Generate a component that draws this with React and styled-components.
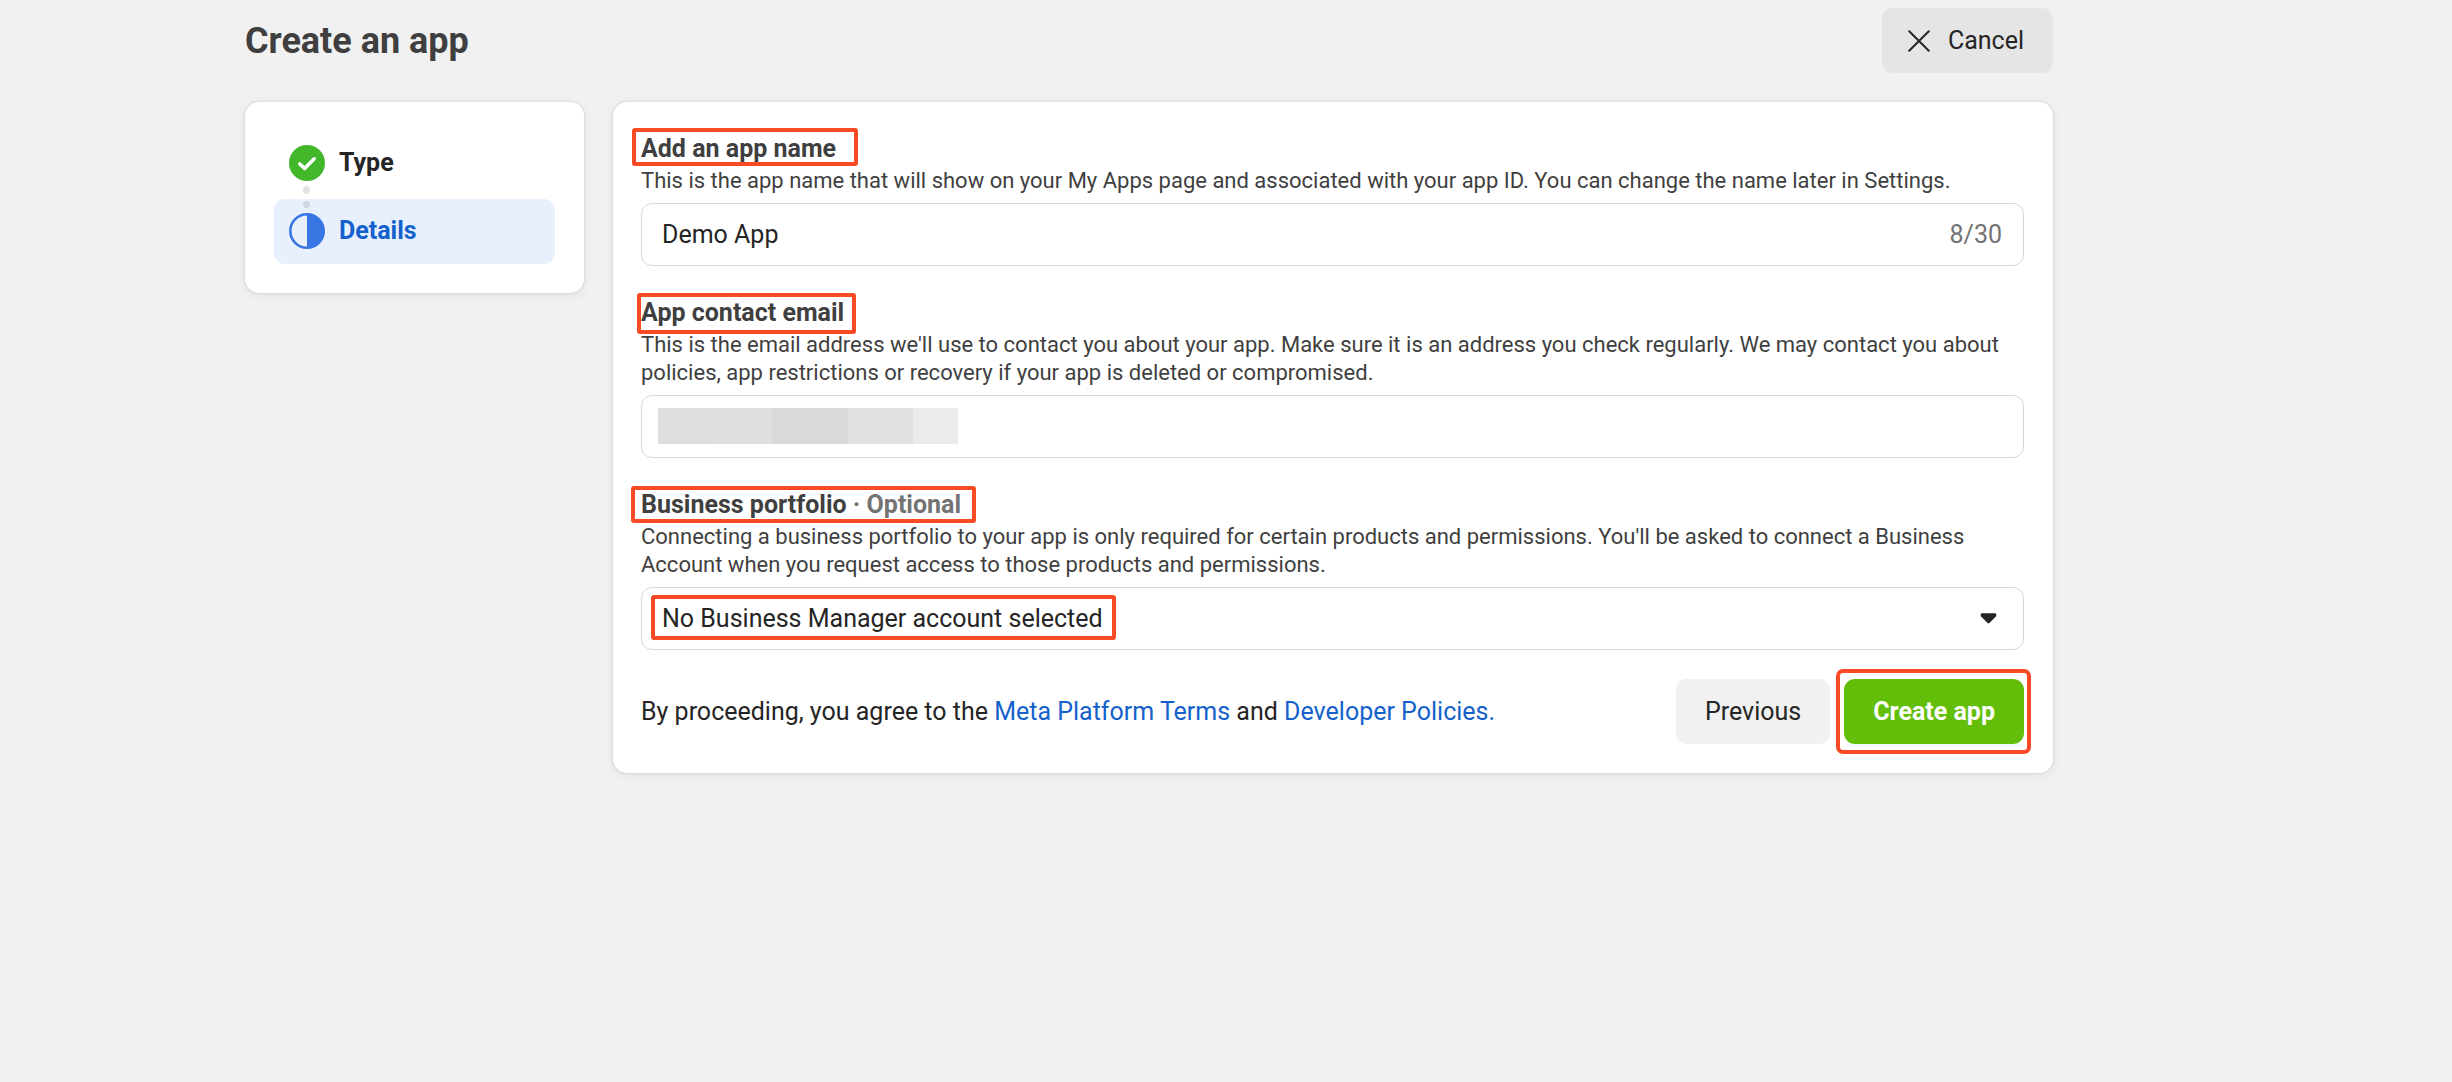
import React, { useState } from "react";
import styled, { createGlobalStyle, css } from "styled-components";

const GlobalStyle = createGlobalStyle`
  *, *::before, *::after { box-sizing: border-box; }
  body {
    margin: 0;
    background: #f1f1f1;
    color: #252525;
    font-family: Roboto, "Liberation Sans", sans-serif;
    font-size: 25px;
    line-height: 32px;
  }
  button, input, select { font: inherit; color: inherit; }
`;

const Page = styled.div`
  display: flex;
  flex-direction: column;
  gap: 29px;
  padding: 8px 399px 29px 245px;
`;

const Header = styled.header`
  display: flex;
  align-items: center;
  justify-content: space-between;
`;

const Title = styled.h1`
  margin: 0;
  font-size: 36px;
  line-height: 44px;
  font-weight: 700;
  color: #3f3f3f;
`;

const Button = styled.button`
  display: inline-flex;
  align-items: center;
  gap: 18px;
  height: 65px;
  padding: 0 29px;
  border: 0;
  border-radius: 11px;
  cursor: pointer;
  white-space: nowrap;
  background: #f1f1f1;
  ${(p) =>
    p.$variant === "primary" &&
    css`
      background: #63be09;
      color: #fff;
      font-weight: 700;
    `}
  ${(p) =>
    p.$variant === "cancel" &&
    css`
      background: #e5e5e5;
      padding: 0 29px 0 26px;
    `}
`;

const Columns = styled.div`
  display: grid;
  grid-template-columns: 339px 1fr;
  gap: 29px;
  align-items: start;
`;

const card = css`
  background: #fff;
  border-radius: 14px;
  padding: 29px;
  box-shadow: 0 0 3px rgba(0, 0, 0, 0.16), 0 3px 12px rgba(0, 0, 0, 0.06);
`;

const Sidebar = styled.nav`
  ${card}
`;

const Steps = styled.ol`
  display: flex;
  flex-direction: column;
  gap: 3px;
  margin: 0;
  padding: 0;
  list-style: none;
`;

const Step = styled.li`
  position: relative;
  display: flex;
  align-items: flex-start;
  gap: 14px;
  height: 65px;
  padding: 14px 15px;
  border-radius: 11px;
  line-height: 36px;
  font-weight: 700;
  color: ${(p) => (p.$active ? "#1461cc" : "#252525")};
  background: ${(p) => (p.$active ? "#e8f0fe" : "transparent")};
`;

const Connector = styled.svg`
  position: absolute;
  left: 29px;
  top: -13px;
`;

const Form = styled.form`
  ${card}
  padding-left: 28px;
  display: flex;
  flex-direction: column;
  gap: 29px;
`;

const Field = styled.div`
  display: flex;
  flex-direction: column;
  align-items: flex-start;
`;

const Highlight = styled.span`
  position: relative;
  &::after {
    content: "";
    position: absolute;
    inset: ${(p) => p.$inset};
    border: 4px solid #f84a25;
    border-radius: ${(p) => p.$radius || "3px"};
    pointer-events: none;
  }
`;

const Label = styled.label`
  display: block;
  padding: 2px 0;
  font-weight: 700;
  color: #3f3f3f;
`;

const Muted = styled.span`
  color: #737373;
`;

const Hint = styled.p`
  margin: 0 0 8px;
  font-size: 22px;
  line-height: 28px;
  color: #3f3f3f;
`;

const Control = styled.div`
  position: relative;
  display: flex;
  align-items: center;
  width: 100%;
  height: 63px;
  padding-right: 21px;
  border: 1px solid #d8d8d8;
  border-radius: 11px;
  background: #fff;
`;

const Input = styled.input`
  flex: 1;
  min-width: 0;
  height: 100%;
  padding: 0 20px;
  border: 0;
  outline: 0;
  background: transparent;
`;

const Counter = styled.span`
  color: #737373;
`;

const Redaction = styled.div`
  position: absolute;
  left: 16px;
  top: 12px;
  display: flex;
  height: 36px;
`;

const Block = styled.span`
  width: ${(p) => p.$w}px;
  background: ${(p) => p.$c};
`;

const SelectHighlight = styled(Highlight)`
  position: absolute;
  left: 9px;
  top: 7px;
  width: 465px;
  height: 45px;
  pointer-events: none;
`;

const Select = styled.select`
  width: 100%;
  height: 100%;
  padding: 0 20px;
  border: 0;
  outline: 0;
  appearance: none;
  background: transparent;
`;

const Caret = styled.svg`
  position: absolute;
  right: 26px;
  pointer-events: none;
`;

const Footer = styled.div`
  display: flex;
  align-items: center;
  justify-content: space-between;
`;

const Terms = styled.p`
  margin: 0;
`;

const Link = styled.a`
  color: #1461cc;
  text-decoration: none;
`;

const Actions = styled.div`
  display: flex;
  gap: 14px;
`;

const ActionHighlight = styled(Highlight)`
  display: flex;
`;

const blocks = [
  [60, "#dedede"],
  [54, "#dfdfdf"],
  [76, "#dadada"],
  [65, "#e1e1e1"],
  [45, "#ebebeb"],
];

export default function App() {
  const [name, setName] = useState("Demo App");
  return (
    <>
      <GlobalStyle />
      <Page>
        <Header>
          <Title>Create an app</Title>
          <Button type="button" $variant="cancel">
            <svg width="22" height="22" viewBox="0 0 22 22" aria-hidden="true">
              <path d="M1.2 1.2 20.8 20.8M20.8 1.2 1.2 20.8" stroke="#252525" strokeWidth="2" strokeLinecap="round" />
            </svg>
            Cancel
          </Button>
        </Header>
        <Columns>
          <Sidebar aria-label="Steps">
            <Steps>
              <Step>
                <svg width="36" height="36" viewBox="0 0 36 36" aria-hidden="true">
                  <circle cx="18" cy="18" r="18" fill="#42b72a" />
                  <path d="M10.8 19 15.6 23.4 25.2 13.8" fill="none" stroke="#fff" strokeWidth="3.6" strokeLinecap="round" strokeLinejoin="round" />
                </svg>
                Type
              </Step>
              <Step $active aria-current="step">
                <Connector width="7" height="23" viewBox="0 0 7 23" aria-hidden="true">
                  <ellipse cx="3.5" cy="4" rx="3.5" ry="4" fill="#e4e4e4" />
                  <circle cx="3.5" cy="18.5" r="3.5" fill="#d1d8e5" />
                </Connector>
                <svg width="36" height="36" viewBox="0 0 36 36" aria-hidden="true">
                  <circle cx="18" cy="18" r="16.7" fill="none" stroke="#3876e4" strokeWidth="2.6" />
                  <path d="M18 1a17 17 0 0 1 0 34z" fill="#3876e4" />
                </svg>
                Details
              </Step>
            </Steps>
          </Sidebar>
          <Form onSubmit={(e) => e.preventDefault()}>
            <Field>
              <Label htmlFor="app-name">
                <Highlight $inset="-6px -22px -3px -9px">Add an app name</Highlight>
              </Label>
              <Hint>
                This is the app name that will show on your My Apps page and associated with your app ID. You can change the name later in Settings.
              </Hint>
              <Control>
                <Input id="app-name" maxLength={30} value={name} onChange={(e) => setName(e.target.value)} />
                <Counter>{name.length}/30</Counter>
              </Control>
            </Field>
            <Field>
              <Label htmlFor="email">
                <Highlight $inset="-5px -12px -7px -4px">App contact email</Highlight>
              </Label>
              <Hint>
                This is the email address we'll use to contact you about your app. Make sure it is an address you check regularly. We may contact you about policies, app restrictions or recovery if your app is deleted or compromised.
              </Hint>
              <Control>
                <Input id="email" type="email" />
                <Redaction aria-hidden="true">
                  {blocks.map(([w, c]) => (
                    <Block key={c} $w={w} $c={c} />
                  ))}
                </Redaction>
              </Control>
            </Field>
            <Field>
              <Label htmlFor="portfolio">
                <Highlight $inset="-4px -15px -4px -10px">
                  Business portfolio <Muted>· Optional</Muted>
                </Highlight>
              </Label>
              <Hint>
                Connecting a business portfolio to your app is only required for certain products and permissions. You'll be asked to connect a Business Account when you request access to those products and permissions.
              </Hint>
              <Control>
                <Select id="portfolio">
                  <option>No Business Manager account selected</option>
                </Select>
                <SelectHighlight $inset="0" aria-hidden="true" />
                <Caret width="17" height="11" viewBox="0 0 17 11" aria-hidden="true">
                  <path d="M2 1.5h13v1L8.5 9 2 2.5z" fill="#252525" stroke="#252525" strokeWidth="2.6" strokeLinejoin="round" />
                </Caret>
              </Control>
            </Field>
            <Footer>
              <Terms>
                By proceeding, you agree to the <Link href="#terms">Meta Platform Terms</Link> and{" "}
                <Link href="#policies">Developer Policies.</Link>
              </Terms>
              <Actions>
                <Button type="button">Previous</Button>
                <ActionHighlight $inset="-10px -7px -10px -8px" $radius="7px">
                  <Button type="submit" $variant="primary">Create app</Button>
                </ActionHighlight>
              </Actions>
            </Footer>
          </Form>
        </Columns>
      </Page>
    </>
  );
}
